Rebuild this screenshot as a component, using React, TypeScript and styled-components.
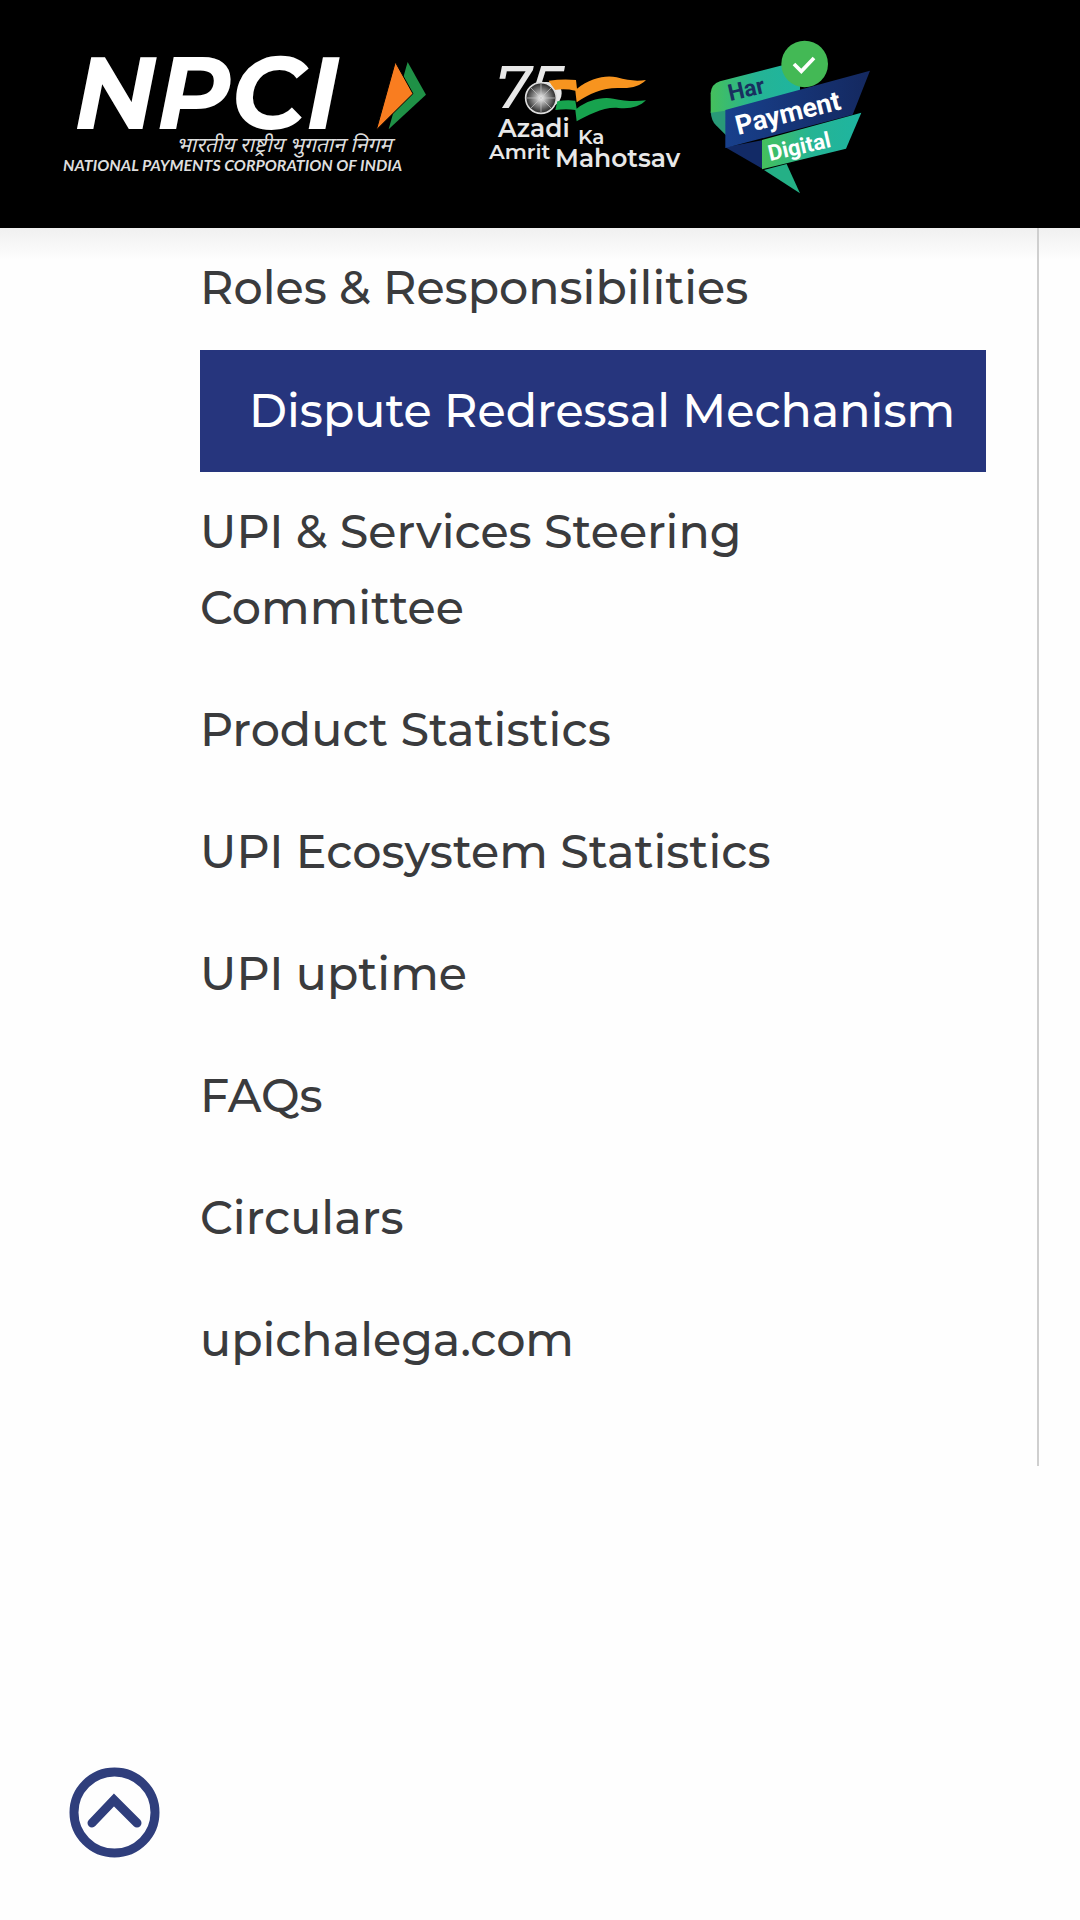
import React from "react";
import styled, { createGlobalStyle } from "styled-components";

const GlobalStyle = createGlobalStyle`
  *, *::before, *::after { box-sizing: border-box; }
  body {
    margin: 0;
    background: #fefefe;
    color: #3a3b3d;
    font-family: Montserrat, Inter, "Noto Sans", sans-serif;
  }
`;

const Page = styled.div`
  min-height: 100vh;
`;

const Header = styled.header`
  display: flex;
  align-items: center;
  height: 228px;
  padding-left: 40px;
  background: #000;
`;

const LogoLink = styled.a`
  display: block;
  color: #fff;
  text-decoration: none;
`;

const LogoArt = styled.svg`
  display: block;
  overflow: visible;
`;

const Main = styled.main`
  padding: 0 41px 0 0;
  background: linear-gradient(#f0f0f0, #fefefe 32px);
`;

const Sidebar = styled.nav`
  padding: 0 51px 64px 200px;
  border-right: 2px solid #cfcfcf;
`;

const MenuList = styled.ul`
  margin: 0;
  padding: 0;
  list-style: none;
`;

const MenuLink = styled.a<{ $active?: boolean }>`
  display: block;
  padding: ${(p) => (p.$active ? "23px 0 23px 49px" : "22px 120px 24px 0")};
  background: ${(p) => (p.$active ? "#26357d" : "transparent")};
  color: ${(p) => (p.$active ? "#fff" : "inherit")};
  font-size: 46px;
  font-weight: 500;
  line-height: 76px;
  text-decoration: none;
`;

const BackToTop = styled.button`
  position: fixed;
  left: 69px;
  bottom: 62px;
  width: 91px;
  height: 91px;
  padding: 0;
  border: 0;
  border-radius: 50%;
  background: transparent;
  color: #2f3e7c;
  cursor: pointer;
`;

const menu = [
  "Roles & Responsibilities",
  "Dispute Redressal Mechanism",
  "UPI & Services Steering Committee",
  "Product Statistics",
  "UPI Ecosystem Statistics",
  "UPI uptime",
  "FAQs",
  "Circulars",
  "upichalega.com",
];

function NpciLogo() {
  return (
    <LogoArt width="430" height="180" viewBox="0 0 430 180" fill="#fff">
      <text x="34" y="105" fontFamily="Montserrat" fontWeight="700" fontStyle="italic" fontSize="102">
        NPCI
      </text>
      <g transform="translate(0 16) scale(.3333)">
        <path d="M1103 66L1158 164L1046 268Z" fill="#1f9146" />
        <path d="M1066 66L1119 161L1009 270Z" fill="#f97d20" stroke="#000" strokeWidth="3" />
      </g>
      <text x="136" y="128" fontFamily="Noto Sans Devanagari, Lohit Devanagari, Noto Sans, sans-serif" fontStyle="italic" fontSize="21" fill="#ddd">
        भारतीय राष्ट्रीय भुगतान निगम
      </text>
      <text x="23" y="147" fontFamily="Lato" fontWeight="700" fontStyle="italic" fontSize="16" fill="#ddd">
        NATIONAL PAYMENTS CORPORATION OF INDIA
      </text>
    </LogoArt>
  );
}

function AzadiLogo() {
  return (
    <LogoArt width="230" height="180" viewBox="0 0 230 180" fill="#e8e8e8">
      <defs>
        <radialGradient id="wheel">
          <stop offset="0" stopColor="#fff" />
          <stop offset=".35" stopColor="#aaa" />
          <stop offset="1" stopColor="#222" />
        </radialGradient>
      </defs>
      <text x="25" y="84" fontFamily="Montserrat" fontWeight="500" fontStyle="italic" fontSize="60">
        75
      </text>
      <g transform="translate(0 16) scale(.3333)">
        <path d="M236 122Q280 116 318 120L321 146C360 116 405 104 440 112C475 122 500 124 528 120C510 138 485 146 450 144C400 142 360 160 320 187L316 152Q285 145 254 150Z" fill="#f7941f" />
        <path d="M262 184Q290 178 316 182L320 206C355 180 395 170 430 176C465 184 500 184 528 181C510 200 480 208 445 204C400 200 355 226 320 244L316 210Q290 205 256 210Z" fill="#17a34e" />
        <circle cx="213" cy="174" r="46" fill="url(#wheel)" stroke="#ddd" strokeWidth="5" />
        <path d="M213 132V216M171 174H255M183 144L243 204M183 204L243 144" stroke="#ccc" strokeWidth="2" />
      </g>
      <g fontFamily="Montserrat" fontWeight="600">
        <text x="28" y="113" fontSize="25">Azadi</text>
        <text x="108" y="120" fontSize="20">Ka</text>
        <text x="19" y="135" fontSize="21">Amrit</text>
        <text x="85" y="143" fontSize="25">Mahotsav</text>
      </g>
    </LogoArt>
  );
}

function HarPaymentLogo() {
  return (
    <LogoArt width="190" height="180" viewBox="0 0 190 180">
      <defs>
        <linearGradient id="top">
          <stop offset="0" stopColor="#45c05c" />
          <stop offset=".5" stopColor="#25b494" />
          <stop offset="1" stopColor="#1eb5a0" />
        </linearGradient>
        <linearGradient id="mid">
          <stop offset="0" stopColor="#18408c" />
          <stop offset="1" stopColor="#14285f" />
        </linearGradient>
      </defs>
      <g transform="translate(0 6) scale(.3333)">
        <path d="M32 245L78 240V316L48 286Q34 272 32 245Z" fill="#299a78" />
        <path d="M60 154L300 92V186L76 242L32 248V190Q34 162 60 154Z" fill="url(#top)" />
        <path d="M76 352L190 330V418Z" fill="#122a66" />
        <path d="M76 240L510 122L458 254L76 354Z" fill="url(#mid)" />
        <path d="M186 330L484 248L438 356L186 418Z" fill="url(#top)" />
        <path d="M192 420L260 402L300 490Z" fill="#24b086" />
        <circle cx="314" cy="102" r="70" fill="#43b955" />
        <path d="M282 102L304 124L342 84" fill="none" stroke="#fff" strokeWidth="11" />
      </g>
      <g fontFamily="Roboto" fontWeight="700" fill="#fff">
        <text transform="translate(30 77) rotate(-13)" fontSize="23" fill="#18305f">Har</text>
        <text transform="translate(38 111) rotate(-14)" fontSize="27">Payment</text>
        <text transform="translate(70 137) rotate(-13)" fontSize="22">Digital</text>
      </g>
    </LogoArt>
  );
}

export default function App() {
  return (
    <Page>
      <GlobalStyle />
      <Header>
        <LogoLink href="#npci" aria-label="NPCI"><NpciLogo /></LogoLink>
        <LogoLink href="#azadi" aria-label="Azadi Ka Amrit Mahotsav"><AzadiLogo /></LogoLink>
        <LogoLink href="#digital" aria-label="Har Payment Digital"><HarPaymentLogo /></LogoLink>
      </Header>
      <Main>
        <Sidebar aria-label="UPI">
          <MenuList>
            {menu.map((label, i) => (
              <li key={label}>
                <MenuLink href="#" $active={i === 1} aria-current={i === 1 ? "page" : undefined}>
                  {label}
                </MenuLink>
              </li>
            ))}
          </MenuList>
        </Sidebar>
      </Main>
      <BackToTop type="button" aria-label="Back to top" onClick={() => window.scrollTo({ top: 0 })}>
        <LogoArt width="91" height="91" viewBox="0 0 91 91" fill="none" stroke="currentColor">
          <circle cx="45.5" cy="45.5" r="40.5" strokeWidth="9" />
          <path d="M23 56L45 33L68 56" strokeWidth="9" strokeLinecap="round" />
        </LogoArt>
      </BackToTop>
    </Page>
  );
}
